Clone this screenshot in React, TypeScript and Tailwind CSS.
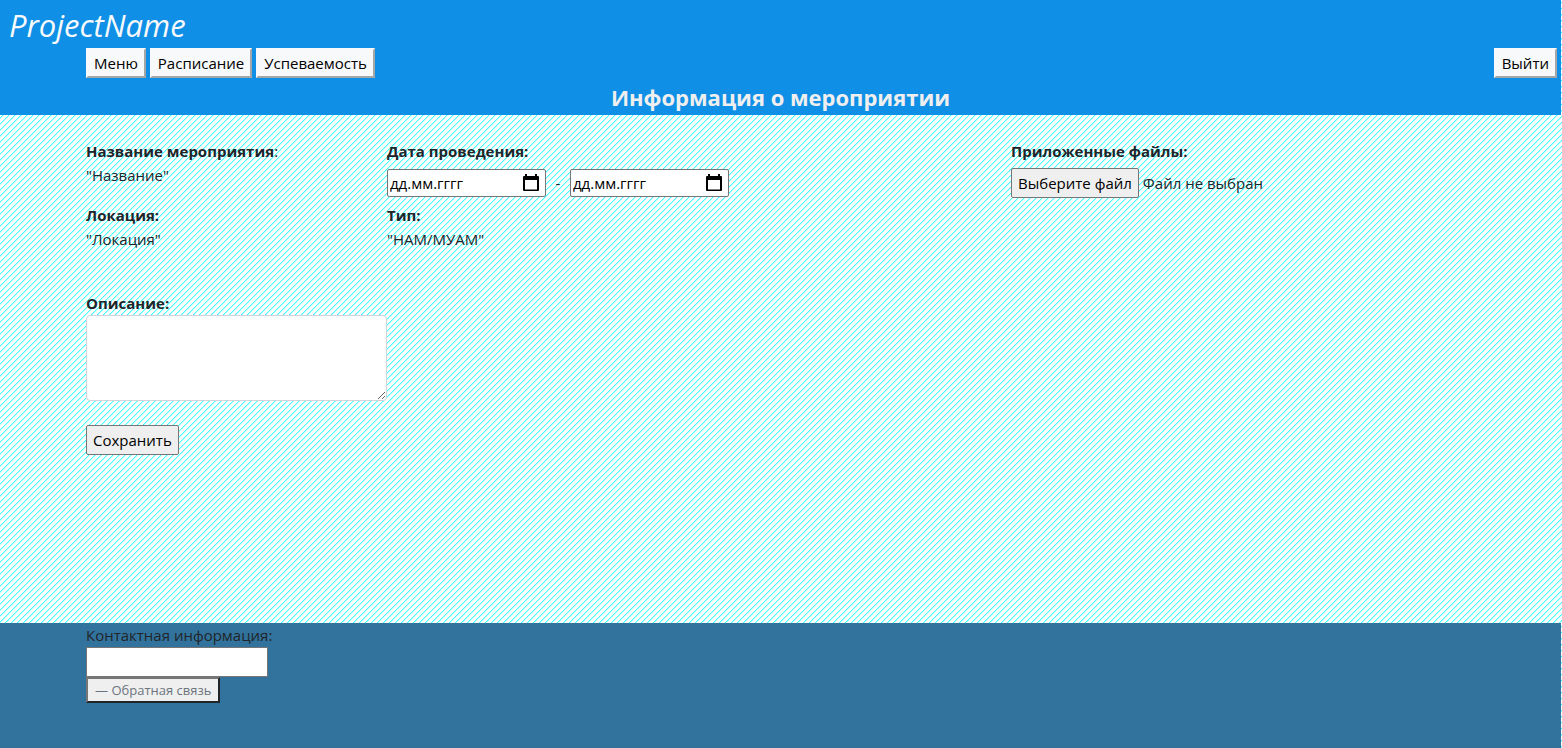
import React from "react";

const raised =
  "border-2 border-t-[#f8f9fa] border-l-[#f8f9fa] border-r-[#a5a6a7] border-b-[#a5a6a7] bg-[#f8f9fa] px-[6px] h-[30px] text-black text-[15px] leading-6";

const native = "rounded-[2px] border border-[#767676] bg-[#efefef] h-[30px] px-[6px] text-black";

const hatch = encodeURIComponent(
  '<svg xmlns="http://www.w3.org/2000/svg" width="6" height="6" viewBox="0 0 6 6" shape-rendering="crispEdges"><rect width="6" height="6" fill="#ffffff"/><path fill="#b8ffff" d="M4 0h1v1h-1zM3 1h1v1h-1zM2 2h1v1h-1zM1 3h1v1h-1zM0 4h1v1h-1zM5 5h1v1h-1z"/><path fill="#44ffff" d="M3 0h1v1h-1zM2 1h1v1h-1zM1 2h1v1h-1zM0 3h1v1h-1zM5 4h1v1h-1zM4 5h1v1h-1z"/></svg>',
);

function DateField({ label }: { label: string }) {
  return (
    <div className="flex h-7 w-[159px] items-center rounded-[2px] border border-[#767676] bg-white pr-[6px] pl-[2px]">
      <input
        type="text"
        aria-label={label}
        placeholder="дд.мм.гггг"
        className="min-w-0 flex-1 text-[15px] text-black outline-none placeholder:text-black"
      />
      <svg viewBox="0 0 16 18" className="h-[18px] w-4 shrink-0" aria-hidden="true">
        <path
          fill="#000"
          fillRule="evenodd"
          d="M2 0h2v2h8V0h2v2h1a1 1 0 0 1 1 1v13a1 1 0 0 1-1 1H1a1 1 0 0 1-1-1V3a1 1 0 0 1 1-1h1zM2 6v9.500h12V6z"
        />
      </svg>
    </div>
  );
}

export default function App() {
  return (
    <div
      className="flex min-h-screen flex-col bg-white bg-[length:6px_6px] pr-px font-['Segoe_UI','Open_Sans','Noto_Sans',sans-serif] text-[15px] leading-6 text-[#212529]"
      style={{ backgroundImage: `url("data:image/svg+xml,${hatch}")` }}
    >
      <header className="bg-[#0f90e6] pt-1">
        <div className="h-11 pl-[9px] text-[31px] leading-[42px] text-[#f8f9fa] italic">ProjectName</div>
        <nav className="flex gap-1 pr-1 pl-[86px]">
          <button className={raised}>Меню</button>
          <button className={raised}>Расписание</button>
          <button className={raised}>Успеваемость</button>
          <button className={raised + " ml-auto"}>Выйти</button>
        </nav>
        <h1 className="mt-1 h-[33px] text-center text-[22px] leading-[30px] font-bold text-[#efefef]">
          Информация о мероприятии
        </h1>
      </header>

      <main className="flex-1 px-[86px] pt-6 pb-[168px]">
        <div className="flex">
          <div className="w-[301px]">
            <div>
              <b>Название мероприятия</b>:
            </div>
            <div>"Название"</div>
            <div className="mt-4 font-bold">Локация:</div>
            <div>"Локация"</div>
          </div>
          <div className="w-[624px]">
            <div className="font-bold">Дата проведения:</div>
            <div className="mt-[6px] flex h-[34px] items-start">
              <DateField label="Дата начала" />
              <span className="w-6 text-center leading-7">-</span>
              <DateField label="Дата окончания" />
            </div>
            <div className="font-bold">Тип:</div>
            <div>"НАМ/МУАМ"</div>
          </div>
          <div>
            <div className="font-bold">Приложенные файлы:</div>
            <div className="mt-[5px] flex items-center gap-1">
              <button className={native}>Выберите файл</button>
              <span>Файл не выбран</span>
            </div>
          </div>
        </div>
        <label htmlFor="description" className="mt-10 block font-bold">
          Описание:
        </label>
        <textarea
          id="description"
          className="block h-[86px] w-[301px] rounded border border-[#ced4da] bg-white px-3 py-1"
        />
        <button className={native + " mt-6"}>Сохранить</button>
      </main>

      <footer className="flex min-h-[125px] flex-col items-start bg-[#31739d] pl-[86px]">
        <label htmlFor="contact">Контактная информация:</label>
        <input
          id="contact"
          className="h-[30px] w-[182px] border border-[#767676] bg-white px-1 text-black"
        />
        <button className="h-[26px] border-2 border-t-[#767676] border-r-[#212529] border-b-[#212529] border-l-[#767676] bg-[#efefef] px-[7px] text-[13px] leading-5 text-[#6c757d]">
          — Обратная связь
        </button>
      </footer>
    </div>
  );
}
